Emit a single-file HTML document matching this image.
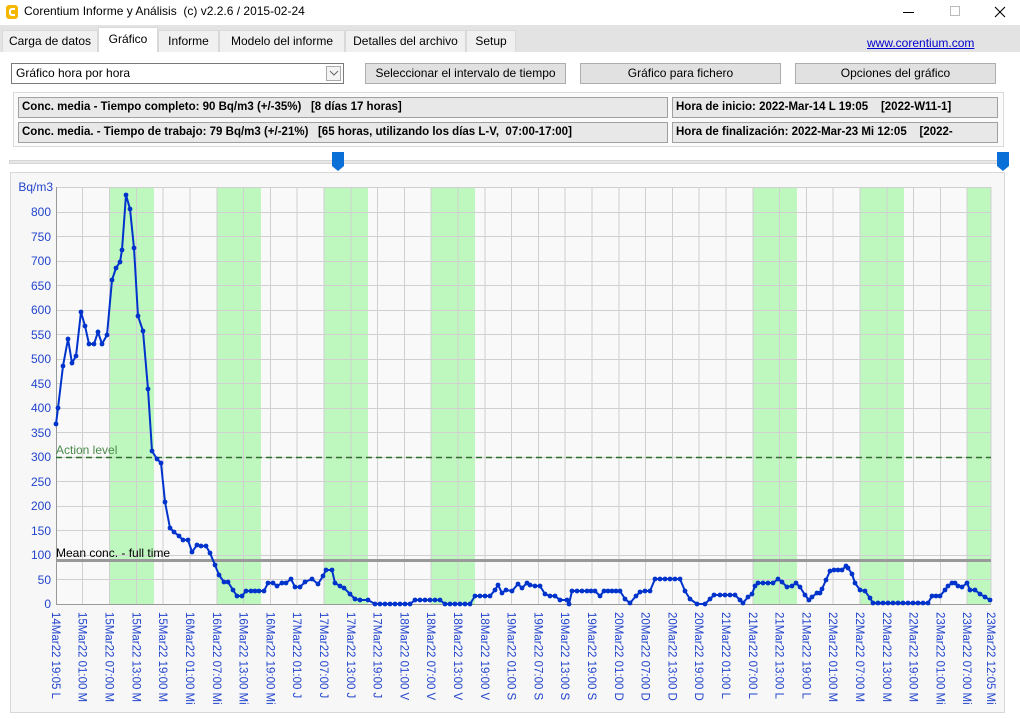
<!DOCTYPE html>
<html><head><meta charset="utf-8"><style>
*{margin:0;padding:0;box-sizing:border-box}
body{width:1020px;height:719px;overflow:hidden;background:#fff;font-family:"Liberation Sans",sans-serif;font-size:12px;color:#000;position:relative}
.a{position:absolute}
.tab{position:absolute;top:30px;height:22px;background:#f0f0f0;border:1px solid #d9d9d9;border-bottom:none;text-align:center;line-height:20px;font-size:12px}
.btn{position:absolute;top:63px;height:21px;background:#e1e1e1;border:1px solid #adadad;text-align:center;line-height:19px}
.tb{position:absolute;height:21px;background:#e8e8e8;border:1px solid #a0a0a0;font-weight:bold;font-size:11.5px;line-height:19px;padding-left:3px;white-space:nowrap;overflow:hidden}
</style></head><body>
<div class="a" style="left:0;top:0;width:1020px;height:25px;background:#fff"></div>
<div class="a" style="left:6px;top:5px;width:12px;height:14px;background:#f5b800;border-radius:3px"></div>
<div class="a" style="left:9px;top:8px;width:6px;height:8px;border:2px solid #fff;border-right:none;border-radius:3px 0 0 3px"></div>
<div class="a" style="left:24px;top:4px;font-size:12px">Corentium Informe y Análisis&nbsp; (c) v2.2.6 / 2015-02-24</div>
<div class="a" style="left:903px;top:12px;width:11px;height:1px;background:#000"></div>
<div class="a" style="left:950px;top:6px;width:10px;height:10px;border:1px solid #bbb"></div>
<svg class="a" style="left:994px;top:6px" width="12" height="12"><path d="M1 1L11 11M11 1L1 11" stroke="#000" stroke-width="1.1"/></svg>
<div class="a" style="left:0;top:25px;width:1020px;height:27px;background:#e3e3e3"></div>
<div class="tab" style="left:2px;width:96px">Carga de datos</div>
<div class="tab" style="left:98px;width:60px;top:27px;height:26px;background:#fff;line-height:22px">Gráfico</div>
<div class="tab" style="left:158px;width:61px">Informe</div>
<div class="tab" style="left:219px;width:126px">Modelo del informe</div>
<div class="tab" style="left:345px;width:121px">Detalles del archivo</div>
<div class="tab" style="left:466px;width:50px">Setup</div>
<div class="a" style="left:867px;top:36px;color:#0000cc;text-decoration:underline">www.corentium.com</div>
<div class="a" style="left:0;top:52px;width:1020px;height:667px;background:#fff"></div>
<div class="a" style="left:11px;top:63px;width:333px;height:21px;border:1px solid #7a7a7a;background:#fff;padding-left:4px;line-height:19px">Gráfico hora por hora</div>
<div class="a" style="left:326px;top:66px;width:15px;height:15px;border:1px solid #aaa;background:#f4f4f4"></div>
<svg class="a" style="left:329px;top:70px" width="10" height="6"><path d="M1 1L5 5L9 1" fill="none" stroke="#666"/></svg>
<div class="btn" style="left:365px;width:201px">Seleccionar el intervalo de tiempo</div>
<div class="btn" style="left:580px;width:201px">Gráfico para fichero</div>
<div class="btn" style="left:795px;width:201px">Opciones del gráfico</div>
<div class="a" style="left:13px;top:92px;width:991px;height:55px;border:1px solid #dadada;background:#fbfbfb"></div>
<div class="tb" style="left:18px;top:97px;width:650px">Conc. media - Tiempo completo: 90 Bq/m3 (+/-35%)&nbsp;&nbsp; [8 días 17 horas]</div>
<div class="tb" style="left:18px;top:122px;width:650px">Conc. media. - Tiempo de trabajo: 79 Bq/m3 (+/-21%)&nbsp;&nbsp; [65 horas, utilizando los días L-V,&nbsp; 07:00-17:00]</div>
<div class="tb" style="left:672px;top:97px;width:326px">Hora de inicio: 2022-Mar-14 L 19:05&nbsp;&nbsp;&nbsp; [2022-W11-1]</div>
<div class="tb" style="left:672px;top:122px;width:326px">Hora de finalización: 2022-Mar-23 Mi 12:05&nbsp;&nbsp;&nbsp; [2022-</div>
<div class="a" style="left:9px;top:160px;width:996px;height:4px;background:#e7e7e7;border:1px solid #d6d6d6"></div>
<svg class="a" style="left:332px;top:152px" width="13" height="20"><path d="M0 0H12V14L6 19L0 14Z" fill="#0a6fd6"/></svg>
<svg class="a" style="left:997px;top:152px" width="13" height="20"><path d="M0 0H12V14L6 19L0 14Z" fill="#0a6fd6"/></svg>
<div class="a" style="left:10px;top:172px;width:995px;height:541px;border:1px solid #d8d8d8;background:#f7f7f7"></div>
<svg class="a" style="left:0;top:0" width="1020" height="719" font-family="Liberation Sans, sans-serif">
<defs><marker id="m" markerWidth="6" markerHeight="6" refX="3" refY="3" markerUnits="userSpaceOnUse"><circle cx="3" cy="3" r="2.4" fill="#0033cc"/></marker></defs>
<rect x="56" y="187" width="935" height="417" fill="#f9f9f9"/>
<g fill="#bff8bf">
<rect x="110" y="187" width="44" height="417"/><rect x="217" y="187" width="44" height="417"/><rect x="324" y="187" width="44" height="417"/><rect x="431" y="187" width="44" height="417"/><rect x="753" y="187" width="44" height="417"/><rect x="860" y="187" width="44" height="417"/><rect x="967" y="187" width="24" height="417"/>
</g>
<g stroke="#d0d0d0" stroke-width="1">
<path d="M56 579.5H991M56 555.5H991M56 530.5H991M56 506.5H991M56 481.5H991M56 457.5H991M56 432.5H991M56 408.5H991M56 383.5H991M56 359.5H991M56 334.5H991M56 310.5H991M56 285.5H991M56 261.5H991M56 236.5H991M56 212.5H991M56 187.5H991"/>
<path d="M82.5 187V604M109.5 187V604M136.5 187V604M163 187V604M190 187V604M217 187V604M243.5 187V604M270.5 187V604M297 187V604M324 187V604M351 187V604M377.5 187V604M404.5 187V604M431 187V604M458 187V604M485 187V604M511.5 187V604M538.5 187V604M565 187V604M592 187V604M619 187V604M645.5 187V604M672.5 187V604M699 187V604M726 187V604M753 187V604M779.5 187V604M806.5 187V604M833 187V604M860 187V604M887 187V604M913.5 187V604M940.5 187V604M967 187V604M991 187V604"/>
</g>
<path d="M56.5 187V604M56 604.5H991" stroke="#999"/>
<g font-size="12" fill="#2244cc" text-anchor="end">
<text x="51" y="608">0</text><text x="51" y="584">50</text><text x="51" y="559">100</text><text x="51" y="535">150</text><text x="51" y="510">200</text><text x="51" y="486">250</text><text x="51" y="461">300</text><text x="51" y="437">350</text><text x="51" y="412">400</text><text x="51" y="388">450</text><text x="51" y="363">500</text><text x="51" y="339">550</text><text x="51" y="314">600</text><text x="51" y="290">650</text><text x="51" y="265">700</text><text x="51" y="241">750</text><text x="51" y="216">800</text>
<text x="53" y="191">Bq/m3</text>
</g>
<path d="M56 457.5H991" stroke="#2a6e2a" stroke-width="1.5" stroke-dasharray="6,4"/>
<text x="56" y="454" font-size="12" fill="#4a8a4a">Action level</text>
<path d="M56 560.5H991" stroke="#999" stroke-width="3"/>
<text x="56" y="557" font-size="12" fill="#000">Mean conc. - full time</text>
<polyline fill="none" stroke="#0033cc" stroke-width="2" marker-start="url(#m)" marker-mid="url(#m)" marker-end="url(#m)" points="56,424 58,408 63,366 68,339 72,363 76,356 81,312 85,326 89,344 94,344 98,332 102,344 107,335 112,280 116,268 120,262 122,250 126,195 130,209 134,248 138,316 143,331 148,389 152,451 157,459 161,463 165,502 170,528 174,532 179,536 183,540 188,540 192,552 197,545 201,546 206,546 210,553 215,565 219,575 224,582 228,582 233,590 237,596 242,596 246,591 251,591 255,591 259,591 264,591 268,583 273,583 277,586 282,583 286,583 291,579 295,587 300,587 305,582 312,579 318,584 323,576 326,570 332,570 335,583 340,586 344,588 350,594 355,599 360,600 368,600 375,604 380,604 385,604 390,604 395,604 400,604 405,604 410,604 415,600 420,600 425,600 430,600 435,600 440,600 445,604 450,604 455,604 460,604 465,604 470,604 475,596 480,596 485,596 490,596 495,590 498,585 502,593 506,590 512,591 518,584 522,588 527,583 530,585 535,586 540,586 545,594 550,596 555,596 560,600 567,600 569,604 572,591 577,591 582,591 587,591 591,591 595,591 600,596 604,591 608,591 612,591 616,591 620,591 625,599 630,603 636,596 640,592 645,591 650,591 655,579 660,579 665,579 670,579 675,579 680,579 685,591 690,599 697,604 705,604 710,599 714,595 720,595 725,595 730,595 735,595 740,600 743,603 748,597 752,594 755,586 758,583 763,583 768,583 773,583 778,579 782,582 787,587 792,586 796,583 800,587 805,595 809,600 812,597 817,593 820,593 822,589 826,580 830,571 834,570 838,570 842,570 846,566 848,568 852,574 855,583 860,590 865,591 870,598 873,603 878,603 883,603 888,603 893,603 898,603 903,603 908,603 913,603 918,603 923,603 928,603 932,596 936,596 940,596 945,590 948,586 952,583 955,583 958,586 962,587 967,583 970,590 975,590 980,594 985,597 990,600"/>
<g font-size="11.5" fill="#2244cc">
<text transform="translate(52,612) rotate(90)">14Mar22 19:05 L</text>
<text transform="translate(78.5,612) rotate(90)">15Mar22 01:00 M</text>
<text transform="translate(105.5,612) rotate(90)">15Mar22 07:00 M</text>
<text transform="translate(132.5,612) rotate(90)">15Mar22 13:00 M</text>
<text transform="translate(159,612) rotate(90)">15Mar22 19:00 M</text>
<text transform="translate(186,612) rotate(90)">16Mar22 01:00 Mi</text>
<text transform="translate(213,612) rotate(90)">16Mar22 07:00 Mi</text>
<text transform="translate(239.5,612) rotate(90)">16Mar22 13:00 Mi</text>
<text transform="translate(266.5,612) rotate(90)">16Mar22 19:00 Mi</text>
<text transform="translate(293,612) rotate(90)">17Mar22 01:00 J</text>
<text transform="translate(320,612) rotate(90)">17Mar22 07:00 J</text>
<text transform="translate(347,612) rotate(90)">17Mar22 13:00 J</text>
<text transform="translate(373.5,612) rotate(90)">17Mar22 19:00 J</text>
<text transform="translate(400.5,612) rotate(90)">18Mar22 01:00 V</text>
<text transform="translate(427,612) rotate(90)">18Mar22 07:00 V</text>
<text transform="translate(454,612) rotate(90)">18Mar22 13:00 V</text>
<text transform="translate(481,612) rotate(90)">18Mar22 19:00 V</text>
<text transform="translate(507.5,612) rotate(90)">19Mar22 01:00 S</text>
<text transform="translate(534.5,612) rotate(90)">19Mar22 07:00 S</text>
<text transform="translate(561,612) rotate(90)">19Mar22 13:00 S</text>
<text transform="translate(588,612) rotate(90)">19Mar22 19:00 S</text>
<text transform="translate(615,612) rotate(90)">20Mar22 01:00 D</text>
<text transform="translate(641.5,612) rotate(90)">20Mar22 07:00 D</text>
<text transform="translate(668.5,612) rotate(90)">20Mar22 13:00 D</text>
<text transform="translate(695,612) rotate(90)">20Mar22 19:00 D</text>
<text transform="translate(722,612) rotate(90)">21Mar22 01:00 L</text>
<text transform="translate(749,612) rotate(90)">21Mar22 07:00 L</text>
<text transform="translate(775.5,612) rotate(90)">21Mar22 13:00 L</text>
<text transform="translate(802.5,612) rotate(90)">21Mar22 19:00 L</text>
<text transform="translate(829,612) rotate(90)">22Mar22 01:00 M</text>
<text transform="translate(856,612) rotate(90)">22Mar22 07:00 M</text>
<text transform="translate(883,612) rotate(90)">22Mar22 13:00 M</text>
<text transform="translate(909.5,612) rotate(90)">22Mar22 19:00 M</text>
<text transform="translate(936.5,612) rotate(90)">23Mar22 01:00 Mi</text>
<text transform="translate(963,612) rotate(90)">23Mar22 07:00 Mi</text>
<text transform="translate(987,612) rotate(90)">23Mar22 12:05 Mi</text>
</g>
</svg>
</body></html>
